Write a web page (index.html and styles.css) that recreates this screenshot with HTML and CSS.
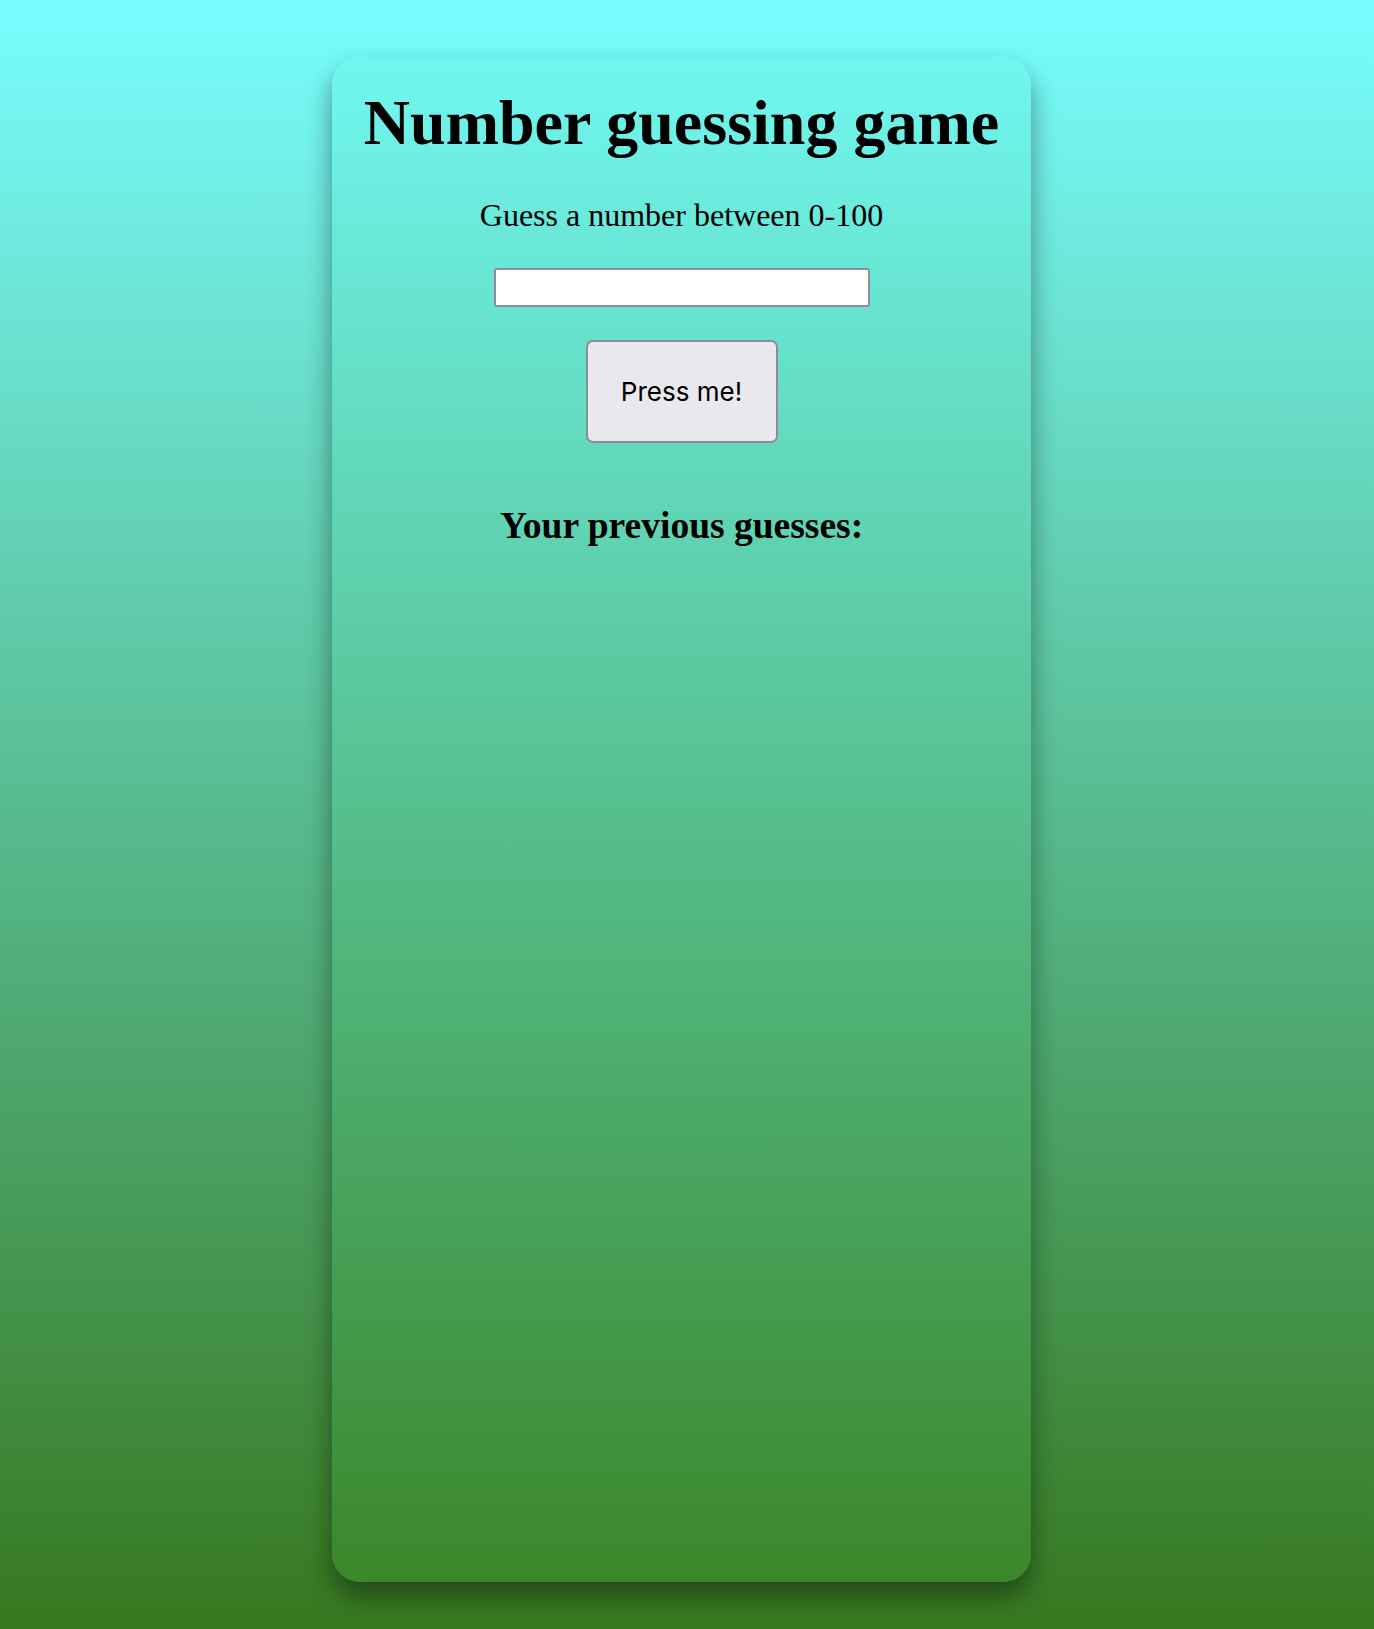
FILE: index.html
```html
<!DOCTYPE html>
<html>
<head>
<meta charset="utf-8">
<link rel="stylesheet" href="styles.css">
</head>
<body>
<div class="card">
  <h1 class="title">Number guessing game</h1>
  <p class="prompt">Guess a number between 0-100</p>
  <input class="guess-input" type="text">
  <button class="guess-btn">Press me!</button>
  <h2 class="prev">Your previous guesses:</h2>
</div>
</body>
</html>
```
FILE: styles.css
```css
html, body {
  margin: 0;
  padding: 0;
}
body {
  min-height: 1629px;
  background: linear-gradient(to bottom, #78fdff 0%, #37781f 100%);
  font-family: "Liberation Serif", "Times New Roman", serif;
  overflow: hidden;
}
.card {
  box-sizing: border-box;
  width: 699px;
  height: 1525px;
  margin: 57px 0 0 332px;
  border-radius: 28px;
  background: linear-gradient(to bottom, #70f6f0 0%, #3b872a 100%);
  box-shadow: 0 14px 26px rgba(0, 0, 0, 0.42);
  display: flex;
  flex-direction: column;
  align-items: center;
}
.title {
  margin: 28px 0 0 0;
  font-size: 64px;
  font-weight: bold;
  line-height: 1.2;
}
.prompt {
  margin: 34px 0 0 0;
  font-size: 32px;
  line-height: 1.2;
}
.guess-input {
  box-sizing: border-box;
  width: 376px;
  height: 39px;
  margin-top: 34px;
  border: 2px solid #8f8c99;
  border-radius: 3px;
  background: #fff;
}
.guess-btn {
  box-sizing: border-box;
  width: 192px;
  height: 103px;
  margin-top: 33px;
  border: 2px solid #8f8c99;
  border-radius: 7px;
  background: #e9e8ed;
  font-family: Inter, "Liberation Sans", sans-serif;
  font-size: 26px;
  color: #000;
}
.prev {
  margin: 60px 0 0 0;
  font-size: 37.5px;
  font-weight: bold;
  line-height: 1.2;
}
```
